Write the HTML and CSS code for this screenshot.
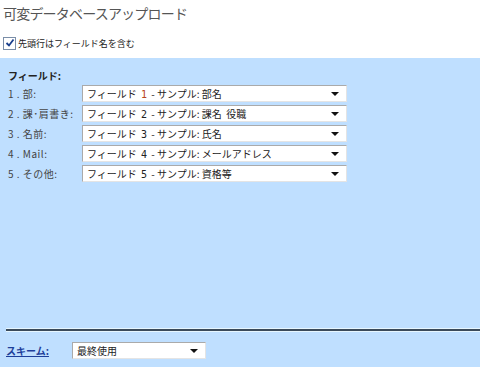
FILE: index.html
```html
<!DOCTYPE html>
<html lang="ja">
<head>
    <meta charset="UTF-8">
    <title>可変データベースアップロード</title>
    <link rel="stylesheet" href="styles.css">
</head>
<body>

<h1 class="title">可変データベースアップロード</h1>

<label class="header-check">
    <span class="check-box"><svg width="10" height="10" viewBox="0 0 10 10"><path d="M1.5 5 L4 7.5 L8.5 1.5" fill="none" stroke="#1a3f8c" stroke-width="1.8"/></svg></span>
    先頭行はフィールド名を含む
</label>

<div class="panel">
    <div class="fields-title">フィールド:</div>
    <div class="field-row">
        <span class="field-label">1 . 部:</span>
        <div class="select"><span>フィールド <b class="num first">1</b> - サンプル: 部名</span><i class="arrow"></i></div>
    </div>
    <div class="field-row">
        <span class="field-label">2 . 課･肩書き:</span>
        <div class="select"><span>フィールド <b class="num">2</b> - サンプル: 課名&nbsp;&nbsp;役職</span><i class="arrow"></i></div>
    </div>
    <div class="field-row">
        <span class="field-label">3 . 名前:</span>
        <div class="select"><span>フィールド <b class="num">3</b> - サンプル: 氏名</span><i class="arrow"></i></div>
    </div>
    <div class="field-row">
        <span class="field-label">4 . Mail:</span>
        <div class="select"><span>フィールド <b class="num">4</b> - サンプル: メールアドレス</span><i class="arrow"></i></div>
    </div>
    <div class="field-row">
        <span class="field-label">5 . その他:</span>
        <div class="select"><span>フィールド <b class="num">5</b> - サンプル: 資格等</span><i class="arrow"></i></div>
    </div>

    <div class="spacer"></div>
    <hr class="divider">

    <div class="scheme-row">
        <a href="#" class="scheme-link">スキーム:</a>
        <div class="select small"><span>最終使用</span><i class="arrow"></i></div>
    </div>
</div>

</body>
</html>
```

FILE: styles.css
```css
body {
    margin: 0;
    background-color: #fff;
    font-family: "Noto Sans CJK JP", "DejaVu Sans", sans-serif;
    font-size: 10px;
    color: #333;
    width: 480px;
    height: 371px;
    overflow: hidden;
}
.title {
    margin: 0;
    padding: 2px 0 0 3px;
    height: 28px;
    font-size: 14px;
    font-weight: normal;
    line-height: 22px;
    letter-spacing: -0.8px;
    color: #555;
}
.header-check {
    display: flex;
    align-items: center;
    gap: 2px;
    margin: 6px 0 0 3px;
    height: 14px;
    font-size: 9px;
    color: #222;
}
.check-box {
    display: inline-flex;
    align-items: center;
    justify-content: center;
    width: 11px;
    height: 11px;
    border: 1px solid #7a8ea8;
    background-color: #fff;
}
.panel {
    margin-top: 8px;
    height: 309px;
    background-color: #bfdfff;
    padding: 10px 0 0 0;
    box-sizing: border-box;
    display: flex;
    flex-direction: column;
}
.fields-title {
    margin-left: 8px;
    height: 17px;
    line-height: 15px;
    font-weight: bold;
    color: #222;
}
.field-row {
    display: flex;
    align-items: center;
    height: 17px;
    margin-bottom: 3px;
}
.field-label {
    width: 74px;
    padding-left: 8px;
    color: #444;
    letter-spacing: 0.5px;
}
.select {
    display: flex;
    align-items: center;
    justify-content: space-between;
    width: 265px;
    height: 17px;
    box-sizing: border-box;
    background-color: #fff;
    border-top: 1px solid #aaa;
    border-left: 1px solid #aaa;
    border-right: 1px solid #e4e4e4;
    border-bottom: 1px solid #e4e4e4;
    padding: 0 7px 0 4px;
    color: #222;
    white-space: nowrap;
}
.num {
    font-weight: normal;
    font-family: "DejaVu Sans Mono", monospace;
    font-size: 10px;
    padding: 0 2px;
}
.num.first {
    color: #b8461c;
}
.arrow {
    width: 0;
    height: 0;
    border-left: 4px solid transparent;
    border-right: 4px solid transparent;
    border-top: 4px solid #111;
}
.spacer {
    flex: 1;
}
.divider {
    margin: 0 0 0 6px;
    height: 0;
    border: none;
    border-top: 2px solid #3a4a5a;
    box-shadow: 0 -1px 0 #e6f6ff, 0 1px 0 #e6f6ff;
}
.scheme-row {
    display: flex;
    align-items: center;
    height: 17px;
    margin: 11px 0 8px 0;
}
.scheme-link {
    width: 66px;
    padding-left: 6px;
    color: #1d3e9a;
    font-weight: bold;
    text-decoration: underline;
}
.select.small {
    width: 134px;
}
```
